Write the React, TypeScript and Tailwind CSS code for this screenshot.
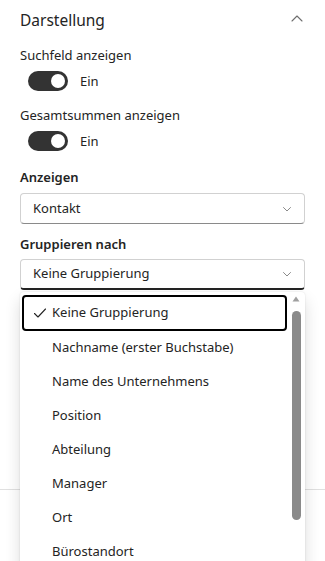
import React from "react";

const font = { fontFamily: '"Noto Sans", "Open Sans", sans-serif' };

function Toggle() {
  return (
    <div className="flex items-center ml-2 mt-[6px] h-5">
      <div className="w-10 h-5 rounded-full bg-[#333333] flex items-center justify-end pr-[3px]">
        <div className="w-[14px] h-[14px] rounded-full bg-white" />
      </div>
      <span className="ml-3 text-[13px] text-[#242424] leading-5">Ein</span>
    </div>
  );
}

function ChevronDown() {
  return (
    <svg width="12" height="12" viewBox="0 0 12 12" fill="none">
      <path d="M2.5 4.5 L6 8 L9.5 4.5" stroke="#8a8a8a" strokeWidth="1" strokeLinecap="round" strokeLinejoin="round" />
    </svg>
  );
}

function Select({ value, open }: { value: string; open?: boolean }) {
  return (
    <div
      className={
        "h-[31px] rounded-[4px] border border-[#d1d1d1] flex items-center justify-between pl-3 pr-[11px] bg-white " +
        (open ? "mt-[5px] border-b-2 border-b-[#242424]" : "mt-[6px] border-b-[#8a8a8a]")
      }
    >
      <span className="text-[13px] text-[#242424]">{value}</span>
      <ChevronDown />
    </div>
  );
}

const items = [
  "Keine Gruppierung",
  "Nachname (erster Buchstabe)",
  "Name des Unternehmens",
  "Position",
  "Abteilung",
  "Manager",
  "Ort",
  "Bürostandort",
];

export default function App() {
  return (
    <div className="relative w-[325px] h-[561px] overflow-hidden bg-white" style={font}>
      <div className="px-5 pt-[9px]">
        <div className="flex items-center justify-between h-6">
          <span className="text-[15.5px] text-[#242424]">Darstellung</span>
          <svg width="14" height="10" viewBox="0 0 14 10" fill="none" className="mr-[1px] -mt-[4px]">
            <path d="M2 7 L7 2 L12 7" stroke="#6e6e6e" strokeWidth="1.1" strokeLinecap="round" strokeLinejoin="round" />
          </svg>
        </div>
        <div className="mt-[12px] text-[13px] text-[#242424] leading-5">Suchfeld anzeigen</div>
        <Toggle />
        <div className="mt-[14px] text-[13px] text-[#242424] leading-5">Gesamtsummen anzeigen</div>
        <Toggle />
        <div className="mt-[16px] text-[13px] font-semibold text-[#242424] leading-5">Anzeigen</div>
        <Select value="Kontakt" />
        <div className="mt-[10px] text-[13px] font-semibold text-[#242424] leading-5">Gruppieren nach</div>
        <Select value="Keine Gruppierung" open />
      </div>
      <div className="mt-[199px] border-t border-[#e0e0e0]" />

      <div className="absolute left-5 top-[292px] w-[285px] h-[300px] bg-white rounded-[4px] shadow-[0_8px_16px_rgba(0,0,0,0.14),0_0_2px_rgba(0,0,0,0.12)] overflow-hidden">
        <div className="flex">
          <div className="flex-1 pl-[2px] pt-[3px] flex flex-col">
            {items.map((it, i) => (
              <div
                key={it}
                className={
                  "flex items-center rounded-[4px] " +
                  (i === 0 ? "border-2 border-[#000000] h-[36px]" : "border-2 border-transparent h-[34px]")
                }
              >
                <div className="w-7 flex justify-center pl-[4px]">
                  {i === 0 && (
                    <svg width="14" height="12" viewBox="0 0 14 12" fill="none">
                      <path d="M1.5 6.5 L5 10 L12.5 2" stroke="#242424" strokeWidth="1.1" strokeLinecap="round" strokeLinejoin="round" />
                    </svg>
                  )}
                </div>
                <span className="text-[13px] text-[#242424]">{it}</span>
              </div>
            ))}
          </div>
          <div className="w-[18px] flex flex-col items-center pt-[4px]">
            <svg width="8" height="6" viewBox="0 0 8 6">
              <path d="M0.5 5.5 L4 0.5 L7.5 5.5 Z" fill="#a0a0a0" />
            </svg>
            <div className="mt-[9px] w-[9px] h-[209px] rounded-full bg-[#8a8a8a]" />
          </div>
        </div>
      </div>
    </div>
  );
}
